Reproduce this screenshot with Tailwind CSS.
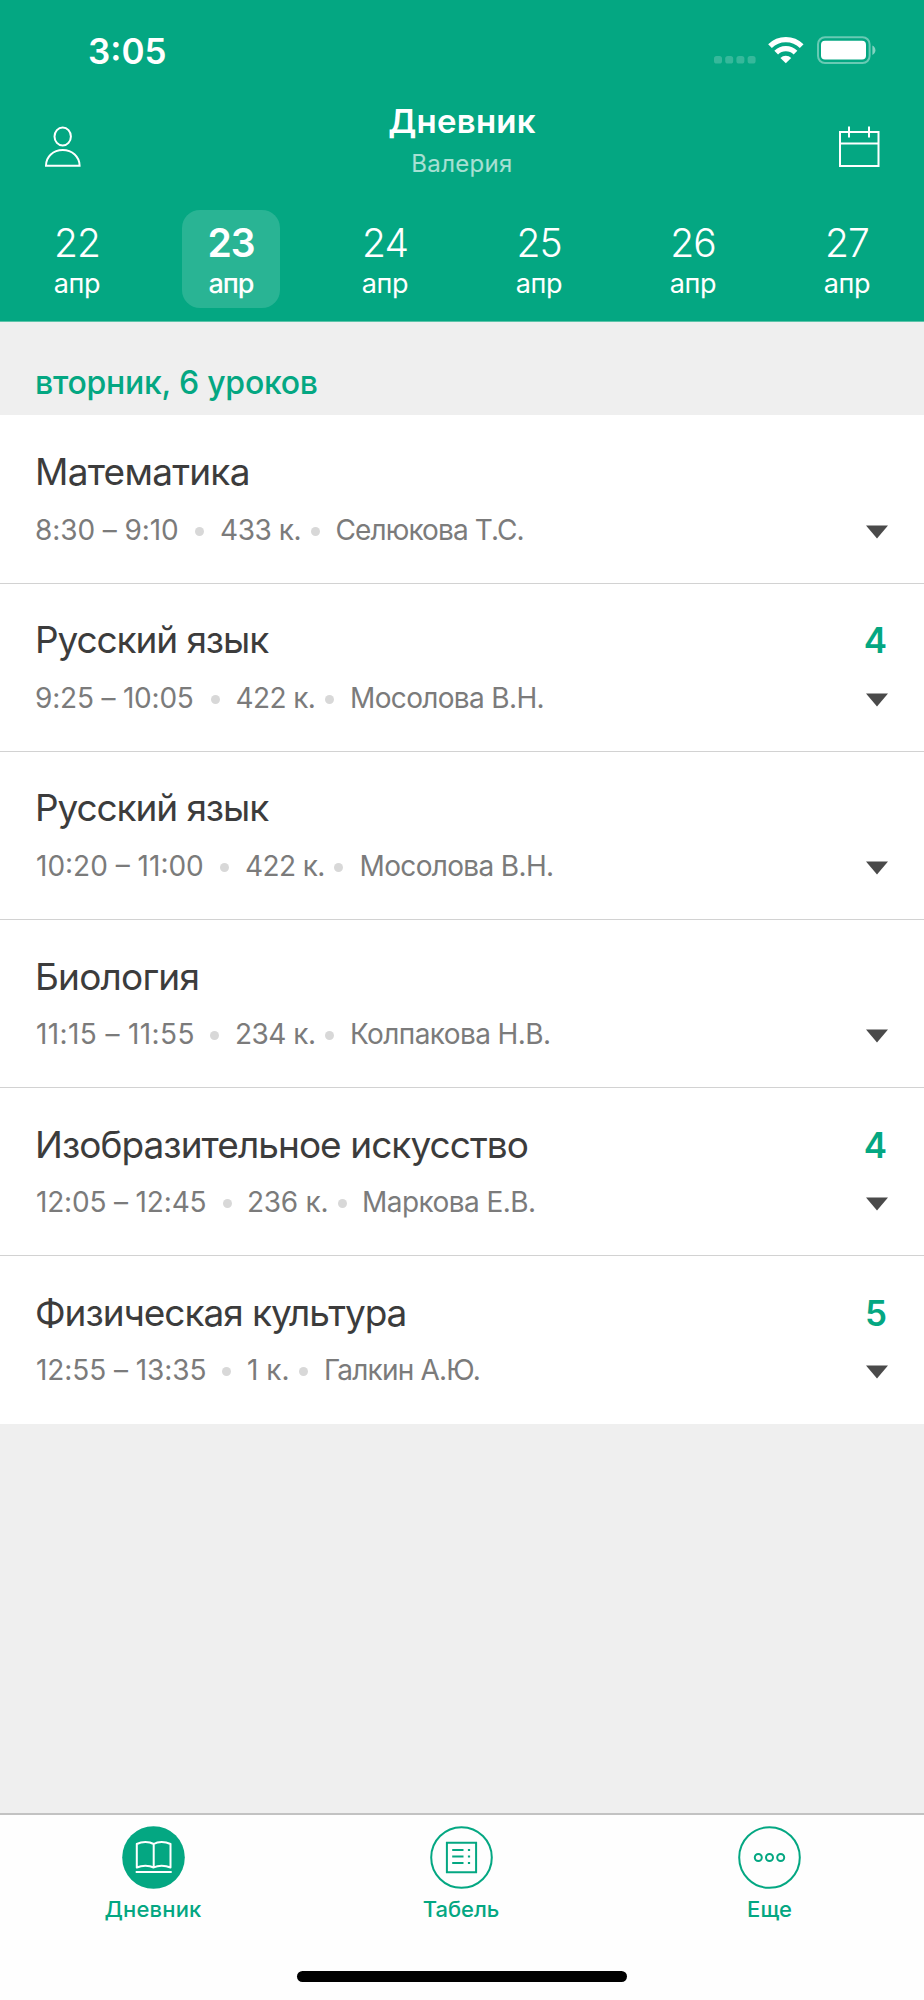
<!DOCTYPE html>
<html lang="ru">
<head>
<meta charset="utf-8">
<title>Дневник</title>
<script src="https://cdn.jsdelivr.net/npm/@tailwindcss/browser@4"></script>
</head>
<body class="bg-[#efefef] font-['Inter',sans-serif]">
<div class="flex h-[2000px] w-[924px] flex-col overflow-hidden">

  <header class="h-[322px] shrink-0 border-b border-[#5cc4a9] bg-[#04a782] text-white">
    <!-- Status bar -->
    <div class="flex h-[101px] items-center justify-between pr-[48px] pl-[88px]">
      <span class="text-[35px] leading-[44px] font-semibold">3:05</span>
      <svg class="mb-[2px] h-[28px] w-[162px]" viewBox="714 36 162 28" fill="none">
        <g fill="#fff" fill-opacity=".2">
          <rect x="714" y="56" width="8" height="7.6" rx="2.6"/><rect x="725.2" y="56" width="8" height="7.6" rx="2.6"/><rect x="736.4" y="56" width="8" height="7.6" rx="2.6"/><rect x="747.6" y="56" width="8" height="7.6" rx="2.6"/>
        </g>
        <g stroke="#fff" stroke-width="5.2">
          <path d="M770 46.2a22.4 22.4 0 0 1 31.7 0"/>
          <path d="M776.2 52.6a13.6 13.6 0 0 1 19.3 0"/>
        </g>
        <path d="M785.8 63.2l-5.4-5.2a7.6 7.6 0 0 1 10.8 0z" fill="#fff"/>
        <rect x="818" y="37.2" width="51.6" height="25.8" rx="7" stroke="#fff" stroke-opacity=".4" stroke-width="2"/>
        <rect x="821" y="40.8" width="45" height="18.8" rx="4" fill="#fff"/>
        <path d="M872.4 45.6c4 1.8 4 7.6 0 9.4z" fill="#fff" fill-opacity=".5"/>
      </svg>
    </div>

    <!-- Title bar -->
    <div class="grid h-[109px] grid-cols-[1fr_auto_1fr] items-start pr-[44px] pl-[44px]">
      <svg class="mt-[25px] h-[42px] w-[38px]" viewBox="44 126 38 42" fill="none" stroke="#fff" stroke-width="2">
        <ellipse cx="62.7" cy="136.5" rx="8.2" ry="9.1"/>
        <path d="M46 165.7c0-9 7.200-15.700 16.700-15.700s16.900 6.700 16.900 15.700z"/>
      </svg>
      <div class="flex flex-col items-center">
        <h1 class="text-[33px] leading-[40px] font-semibold tracking-[0.25px]">Дневник</h1>
        <p class="mt-[8px] text-[24px] leading-[30px] tracking-[0.3px] text-white/65">Валерия</p>
      </div>
      <svg class="mt-[25px] h-[42px] w-[42px] justify-self-end" viewBox="838 126 42 42" fill="none" stroke="#fff" stroke-width="2">
        <path d="M840 132h38.500v34h-38.500zM840 143.500h38.500M849 126.500v11M869 126.500v11"/>
      </svg>
    </div>

    <!-- Days -->
    <div class="grid h-[98px] grid-cols-6 justify-items-center">
      <div class="flex w-[98px] flex-col items-center pt-[11px]"><span class="text-[39px] leading-[44px] font-light tracking-[-1px]">22</span><span class="mt-[3px] text-[27px] leading-[32px] tracking-[-0.3px]">апр</span></div>
      <div class="flex w-[98px] flex-col items-center rounded-[18px] bg-white/15 pt-[11px]"><span class="text-[39px] leading-[44px] font-semibold tracking-[-1px]">23</span><span class="mt-[3px] text-[27px] leading-[32px] font-medium tracking-[-1px]">апр</span></div>
      <div class="flex w-[98px] flex-col items-center pt-[11px]"><span class="text-[39px] leading-[44px] font-light tracking-[-1px]">24</span><span class="mt-[3px] text-[27px] leading-[32px] tracking-[-0.3px]">апр</span></div>
      <div class="flex w-[98px] flex-col items-center pt-[11px]"><span class="text-[39px] leading-[44px] font-light tracking-[-1px]">25</span><span class="mt-[3px] text-[27px] leading-[32px] tracking-[-0.3px]">апр</span></div>
      <div class="flex w-[98px] flex-col items-center pt-[11px]"><span class="text-[39px] leading-[44px] font-light tracking-[-1px]">26</span><span class="mt-[3px] text-[27px] leading-[32px] tracking-[-0.3px]">апр</span></div>
      <div class="flex w-[98px] flex-col items-center pt-[11px]"><span class="text-[39px] leading-[44px] font-light tracking-[-1px]">27</span><span class="mt-[3px] text-[27px] leading-[32px] tracking-[-0.3px]">апр</span></div>
    </div>
  </header>

  <main class="flex-1">
    <h2 class="h-[93px] pt-[41px] pl-[35px] text-[32px] leading-[40px] font-medium tracking-[-0.25px] text-[#04a782]">вторник, 6 уроков</h2>

    <ul class="text-[28px] leading-[34px] text-[#7b7b7b]">
      <li class="h-[168px] border-t border-white bg-white px-[36px] pt-[34px]">
        <div class="flex h-[44px] justify-between text-[37px] leading-[44px] text-[#3c3c3c]"><h3 class="-ml-[1px] tracking-[-0.75px]">Математика</h3></div>
        <div class="mt-[19px] flex items-center whitespace-nowrap">
          <span class="w-[159px] -ml-[1px] mr-[1px] tracking-[-0.1px]">8:30 – 9:10</span><i class="mt-[2px] mr-[16px] size-[9px] shrink-0 rounded-full bg-[#d8d8d8]"></i>
          <span class="w-[90.5px] tracking-[-0.44px]">433 к.</span><i class="mt-[2px] mr-[16px] size-[9px] shrink-0 rounded-full bg-[#d8d8d8]"></i>
          <span class="tracking-[-0.89px]">Селюкова Т.С.</span>
          <svg class="mt-[3px] ml-auto h-[14px] w-[22px]" viewBox="0 0 22 14"><path d="M0 .5h22L11 13.500z" fill="#4a4a4a"/></svg>
        </div>
      </li>
      <li class="h-[168px] border-t border-[#d2d2d2] bg-white px-[36px] pt-[34px]">
        <div class="flex h-[44px] justify-between text-[37px] leading-[44px] text-[#3c3c3c]"><h3 class="-ml-[1px] tracking-[-1.1px]">Русский язык</h3><b class="mr-[1px] text-[35px] font-semibold text-[#04a782]">4</b></div>
        <div class="mt-[19px] flex items-center whitespace-nowrap">
          <span class="w-[174.5px] -ml-[1px] mr-[1px] tracking-[-0.2px]">9:25 – 10:05</span><i class="mt-[2px] mr-[16px] size-[9px] shrink-0 rounded-full bg-[#d8d8d8]"></i>
          <span class="w-[89px] tracking-[-0.6px]">422 к.</span><i class="mt-[2px] mr-[16.5px] size-[9px] shrink-0 rounded-full bg-[#d8d8d8]"></i>
          <span class="tracking-[-0.65px]">Мосолова В.Н.</span>
          <svg class="mt-[3px] ml-auto h-[14px] w-[22px]" viewBox="0 0 22 14"><path d="M0 .5h22L11 13.500z" fill="#4a4a4a"/></svg>
        </div>
      </li>
      <li class="h-[168px] border-t border-[#d2d2d2] bg-white px-[36px] pt-[34px]">
        <div class="flex h-[44px] justify-between text-[37px] leading-[44px] text-[#3c3c3c]"><h3 class="-ml-[1px] tracking-[-1.1px]">Русский язык</h3></div>
        <div class="mt-[19px] flex items-center whitespace-nowrap">
          <span class="w-[184px] tracking-[0px]">10:20 – 11:00</span><i class="mt-[2px] mr-[16px] size-[9px] shrink-0 rounded-full bg-[#d8d8d8]"></i>
          <span class="w-[89px] tracking-[-0.6px]">422 к.</span><i class="mt-[2px] mr-[16.5px] size-[9px] shrink-0 rounded-full bg-[#d8d8d8]"></i>
          <span class="tracking-[-0.65px]">Мосолова В.Н.</span>
          <svg class="mt-[3px] ml-auto h-[14px] w-[22px]" viewBox="0 0 22 14"><path d="M0 .5h22L11 13.500z" fill="#4a4a4a"/></svg>
        </div>
      </li>
      <li class="h-[168px] border-t border-[#d2d2d2] bg-white px-[36px] pt-[35px]">
        <div class="flex h-[44px] justify-between text-[37px] leading-[44px] text-[#3c3c3c]"><h3 class="-ml-[1px] tracking-[-0.8px]">Биология</h3></div>
        <div class="mt-[18px] flex items-center whitespace-nowrap">
          <span class="w-[174px] tracking-[0.38px]">11:15 – 11:55</span><i class="mt-[2px] mr-[16px] size-[9px] shrink-0 rounded-full bg-[#d8d8d8]"></i>
          <span class="w-[89.5px] tracking-[-0.5px]">234 к.</span><i class="mt-[2px] mr-[16.5px] size-[9px] shrink-0 rounded-full bg-[#d8d8d8]"></i>
          <span class="tracking-[-0.6px]">Колпакова Н.В.</span>
          <svg class="mt-[3px] ml-auto h-[14px] w-[22px]" viewBox="0 0 22 14"><path d="M0 .5h22L11 13.500z" fill="#4a4a4a"/></svg>
        </div>
      </li>
      <li class="h-[168px] border-t border-[#d2d2d2] bg-white px-[36px] pt-[35px]">
        <div class="flex h-[44px] justify-between text-[37px] leading-[44px] text-[#3c3c3c]"><h3 class="-ml-[1px] tracking-[-0.95px]">Изобразительное искусство</h3><b class="mr-[1px] text-[35px] font-semibold text-[#04a782]">4</b></div>
        <div class="mt-[18px] flex items-center whitespace-nowrap">
          <span class="w-[186.5px] tracking-[-0.17px]">12:05 – 12:45</span><i class="mt-[2px] mr-[15.5px] size-[9px] shrink-0 rounded-full bg-[#d8d8d8]"></i>
          <span class="w-[90.5px] tracking-[-0.25px]">236 к.</span><i class="mt-[2px] mr-[15.5px] size-[9px] shrink-0 rounded-full bg-[#d8d8d8]"></i>
          <span class="tracking-[-0.55px]">Маркова Е.В.</span>
          <svg class="mt-[3px] ml-auto h-[14px] w-[22px]" viewBox="0 0 22 14"><path d="M0 .5h22L11 13.500z" fill="#4a4a4a"/></svg>
        </div>
      </li>
      <li class="h-[169px] border-t border-[#d2d2d2] bg-white px-[36px] pt-[35px]">
        <div class="flex h-[44px] justify-between text-[37px] leading-[44px] text-[#3c3c3c]"><h3 class="-ml-[1px] tracking-[-1.05px]">Физическая культура</h3><b class="mr-[1px] text-[35px] font-semibold text-[#04a782]">5</b></div>
        <div class="mt-[18px] flex items-center whitespace-nowrap">
          <span class="w-[186px] tracking-[-0.08px]">12:55 – 13:35</span><i class="mt-[2px] mr-[16px] size-[9px] shrink-0 rounded-full bg-[#d8d8d8]"></i>
          <span class="w-[51.5px]">1 к.</span><i class="mt-[2px] mr-[16.5px] size-[9px] shrink-0 rounded-full bg-[#d8d8d8]"></i>
          <span class="tracking-[-0.8px]">Галкин А.Ю.</span>
          <svg class="mt-[3px] ml-auto h-[14px] w-[22px]" viewBox="0 0 22 14"><path d="M0 .5h22L11 13.500z" fill="#4a4a4a"/></svg>
        </div>
      </li>
    </ul>
  </main>

  <!-- Tab bar -->
  <nav class="flex h-[187px] shrink-0 flex-col items-center border-t-2 border-t-[#c2c2c2] bg-[#fefefe]">
    <div class="grid w-full grid-cols-3 pt-[11px] text-[22px] leading-[28px] font-medium text-[#04a782]">
      <div class="flex flex-col items-center gap-[6px] pr-[2px]">
        <svg class="size-[63px]" viewBox="0 0 63 63" fill="none"><circle cx="31.500" cy="31.500" r="31.300" fill="#04a782"/>
          <path d="M14.800 18C20 15.400 27 15.400 31.700 18C36 15.400 43 15.400 48.500 18V41.500C43 39 36 39 31.700 41.500C27 39 20 39 14.800 41.500ZM31.700 18V41.500" stroke="#fff" stroke-width="2" stroke-linejoin="round"/>
          <path d="M13.700 46h36" stroke="#fff" stroke-width="2.200"/></svg>
        <span class="tracking-[0.15px]">Дневник</span>
      </div>
      <div class="flex flex-col items-center gap-[6px] pr-[2px]">
        <svg class="size-[63px]" viewBox="0 0 63 63" fill="none" stroke="#04a782" stroke-width="2"><circle cx="31.500" cy="31.500" r="30.300"/>
          <path d="M16.900 16.700h29.200v29.500h-29.200zM22.200 24h11.300M22.200 30.500h11.300M22.200 37h11.300M37.900 24h2.200M37.900 30.500h2.200M37.900 37h2.200"/></svg>
        <span>Табель</span>
      </div>
      <div class="flex flex-col items-center gap-[6px] pr-[1px]">
        <svg class="size-[63px]" viewBox="0 0 63 63" fill="none" stroke="#04a782" stroke-width="2"><circle cx="31.500" cy="31.500" r="30.300"/>
          <circle cx="20.300" cy="31.500" r="3.500"/><circle cx="31.500" cy="31.500" r="3.500"/><circle cx="42.700" cy="31.500" r="3.500"/></svg>
        <span>Еще</span>
      </div>
    </div>
    <div class="mt-[48px] h-[11px] w-[330px] rounded-full bg-black"></div>
  </nav>
</div>
</body>
</html>
